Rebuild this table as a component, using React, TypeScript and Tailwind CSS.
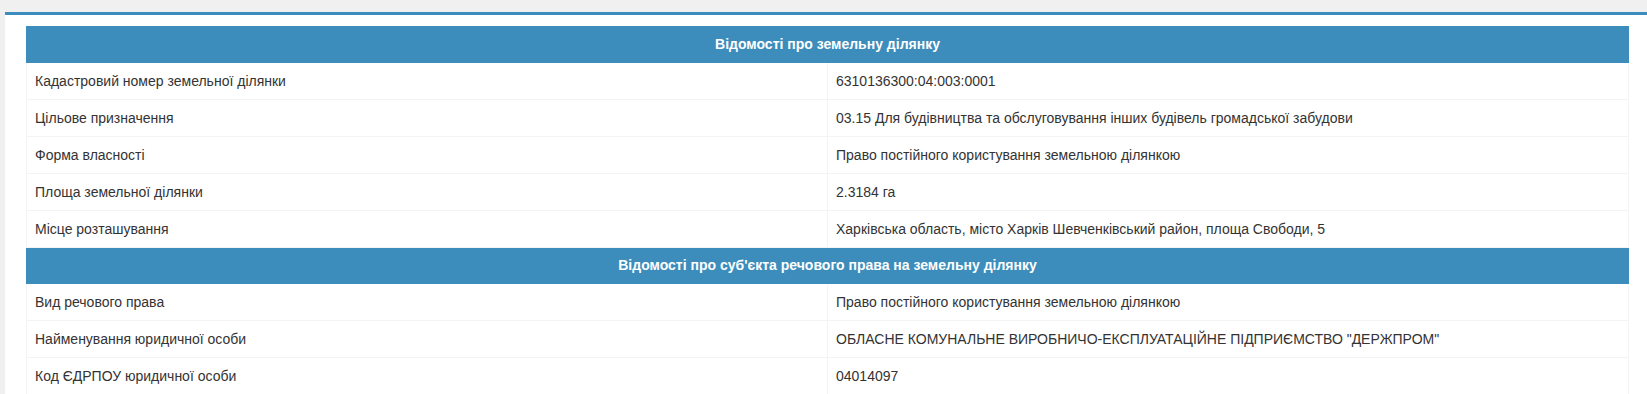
const parcel = [
  ['Кадастровий номер земельної ділянки', '6310136300:04:003:0001'],
  ['Цільове призначення', '03.15 Для будівництва та обслуговування інших будівель громадської забудови'],
  ['Форма власності', 'Право постійного користування земельною ділянкою'],
  ['Площа земельної ділянки', '2.3184 га'],
  ['Місце розташування', 'Харківська область, місто Харків Шевченківський район, площа Свободи, 5'],
];

const subject = [
  ['Вид речового права', 'Право постійного користування земельною ділянкою'],
  ['Найменування юридичної особи', 'ОБЛАСНЕ КОМУНАЛЬНЕ ВИРОБНИЧО-ЕКСПЛУАТАЦІЙНЕ ПІДПРИЄМСТВО "ДЕРЖПРОМ"'],
  ['Код ЄДРПОУ юридичної особи', '04014097'],
];

function Section({ title, rows }: { title: string; rows: string[][] }) {
  return (
    <>
      <tr>
        <th colSpan={2} className="bg-[#3c8dbc] text-white text-[14px] font-bold text-center h-[36px] border border-[#3c8dbc]">
          {title}
        </th>
      </tr>
      {rows.map(([label, value]) => (
        <tr key={label}>
          <td className="w-1/2 border border-[#f4f4f4] px-2 py-2 leading-5">{label}</td>
          <td className="w-1/2 border border-[#f4f4f4] px-2 py-2 leading-5">{value}</td>
        </tr>
      ))}
    </>
  );
}

export default function App() {
  return (
    <div className="min-h-screen bg-[#f0f0f0] pt-3 pl-[5px] font-['Liberation_Sans',Arial,sans-serif] text-[14px] text-[#333]">
      <div className="bg-white border-t-[3px] border-[#3c8dbc] pt-[11px] pl-[21px] pr-[18px] pb-4">
        <table className="w-full border-collapse table-fixed">
          <tbody>
            <Section title="Відомості про земельну ділянку" rows={parcel} />
            <Section title="Відомості про суб'єкта речового права на земельну ділянку" rows={subject} />
          </tbody>
        </table>
      </div>
    </div>
  );
}
